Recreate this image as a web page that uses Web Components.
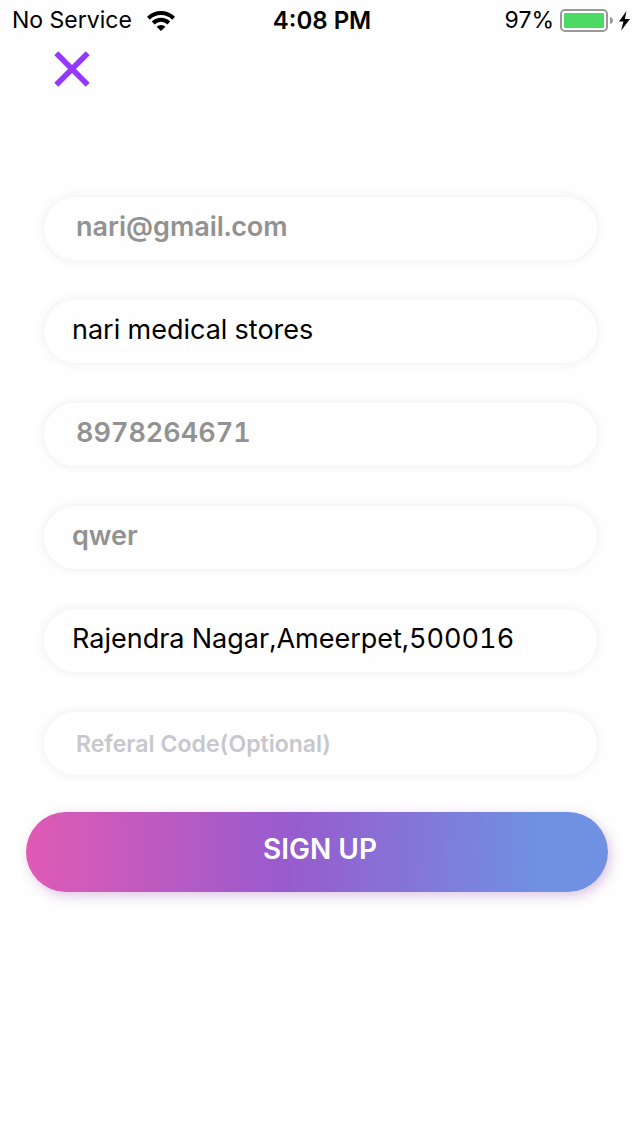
<!DOCTYPE html>
<html lang="en">

<head>
    <meta charset="UTF-8">
    <meta name="viewport" content="width=device-width, initial-scale=1.0">
    <title>Sign Up</title>
    <style>
        body {
            margin: 0;
            background: #fefefe;
            color: #000;
            font-family: Inter, "Liberation Sans", sans-serif;
        }
    </style>
</head>

<body>
    <status-bar>
        <span slot="carrier">No Service</span>
        <span slot="time">4:08 PM</span>
        <span slot="battery">97%</span>
    </status-bar>

    <close-button></close-button>

    <sign-up-form>
        <pill-field label="Email" type="email" value="nari@gmail.com" muted inset></pill-field>
        <pill-field label="Store name" value="nari medical stores"></pill-field>
        <pill-field label="Phone" type="tel" value="8978264671" muted inset></pill-field>
        <pill-field label="Contact name" value="qwer" muted></pill-field>
        <pill-field label="Address" value="Rajendra Nagar,Ameerpet,500016"></pill-field>
        <pill-field label="Referal code" placeholder="Referal Code(Optional)" inset></pill-field>
        <gradient-button slot="action">SIGN UP</gradient-button>
    </sign-up-form>

    <script>
        // Status bar ............................................................... //

        class StatusBar extends HTMLElement {
            constructor() {
                super();
                const shadow = this.attachShadow({ mode: 'open' });
                shadow.innerHTML = `
                    <style>
                        :host {
                            display: grid;
                            grid-template-columns: 1fr auto 1fr;
                            align-items: center;
                            padding: 0 8px 0 12px;
                            font-size: 23px;
                            line-height: 41px;
                        }
                        div { display: flex; align-items: center; }
                        .left { gap: 14px; }
                        .time { font-size: 24px; font-weight: 600; }
                        .right { justify-content: flex-end; gap: 6px; }
                        svg { display: block; flex: none; }
                    </style>
                    <div class="left">
                        <slot name="carrier"></slot>
                        <svg width="30" height="22" viewBox="0 0 30 22" aria-hidden="true">
                            <g fill="none" stroke="#000" stroke-width="4">
                                <path d="M2.4 8.2 A18 18 0 0 1 27.6 8.2"/>
                                <path d="M7.2 13 A11.2 11.2 0 0 1 22.8 13"/>
                            </g>
                            <path d="M10.6 16.7 A6.4 6.4 0 0 1 19.4 16.7 L15 21 Z"/>
                        </svg>
                    </div>
                    <div class="time"><slot name="time"></slot></div>
                    <div class="right">
                        <slot name="battery"></slot>
                        <svg width="72" height="24" viewBox="0 0 72 24" aria-hidden="true">
                            <rect x="1" y="1" width="46" height="21" rx="4" fill="#fff" stroke="#999" stroke-width="2"/>
                            <rect x="4" y="4" width="40" height="15" rx="1" fill="#4cd964"/>
                            <path d="M50 8 Q53 9 53 11.5 T50 15 Z" fill="#999"/>
                            <path d="M66.5 2 L59 12.6 H63.4 L61.2 21.4 L70 10 H64.8 Z"/>
                        </svg>
                    </div>
                `;
            }
        }

        customElements.define('status-bar', StatusBar);

        // Close button ............................................................... //

        class CloseButton extends HTMLElement {
            constructor() {
                super();
                const shadow = this.attachShadow({ mode: 'open' });
                shadow.innerHTML = `
                    <style>
                        :host { display: block; padding: 6px 50px; }
                        button {
                            display: block;
                            padding: 4px;
                            border: 0;
                            background: none;
                            cursor: pointer;
                        }
                        svg { display: block; }
                    </style>
                    <button type="button" aria-label="Close">
                        <svg width="36" height="36" viewBox="0 0 36 36">
                            <path d="M2.3 2.3 L33.7 33.7 M33.7 2.3 L2.3 33.7" stroke="#9538ff" stroke-width="5.6"/>
                        </svg>
                    </button>
                `;
            }
        }

        customElements.define('close-button', CloseButton);

        // Rounded text field ............................................................... //

        class PillField extends HTMLElement {
            constructor() {
                super();
                const shadow = this.attachShadow({ mode: 'open' });
                shadow.innerHTML = `
                    <style>
                        :host { display: block; }
                        input {
                            display: block;
                            box-sizing: border-box;
                            width: 100%;
                            height: 67px;
                            margin: 0;
                            padding: 0 28px 4px;
                            border: 2px solid #f7f7f7;
                            border-radius: 34px;
                            outline: 0;
                            background: #fefefe;
                            box-shadow: 0 0 8px rgba(0, 0, 0, 0.05);
                            color: #000;
                            font: 400 27px Inter, "Liberation Sans", sans-serif;
                            font-variant-numeric: tabular-nums;
                        }
                        :host([inset]) input { padding-left: 32px; }
                        :host([muted]) input { color: #929292; font-weight: 600; }
                        input:placeholder-shown {
                            padding-bottom: 0;
                            font-size: 23px;
                            font-weight: 600;
                        }
                        input::placeholder { color: #c7c7cd; opacity: 1; }
                    </style>
                    <input>
                `;
            }

            connectedCallback() {
                const input = this.shadowRoot.querySelector('input');
                input.type = this.getAttribute('type') || 'text';
                input.placeholder = this.getAttribute('placeholder') || '';
                input.value = this.getAttribute('value') || '';
                input.setAttribute('aria-label', this.getAttribute('label'));
            }
        }

        customElements.define('pill-field', PillField);

        // Gradient button ............................................................... //

        class GradientButton extends HTMLElement {
            constructor() {
                super();
                const shadow = this.attachShadow({ mode: 'open' });
                shadow.innerHTML = `
                    <style>
                        :host { display: block; }
                        button {
                            display: block;
                            width: 100%;
                            height: 80px;
                            padding: 0 0 6px 6px;
                            border: 0;
                            border-radius: 40px;
                            background: linear-gradient(91deg, #e05ab4 0%, #985bce 45%, #7090e2 88%);
                            box-shadow: 3px 4px 12px rgba(150, 70, 170, 0.3);
                            color: #fff;
                            font: 600 28px Inter, "Liberation Sans", sans-serif;
                            cursor: pointer;
                        }
                    </style>
                    <button type="button"><slot></slot></button>
                `;
            }
        }

        customElements.define('gradient-button', GradientButton);

        // Form layout ............................................................... //

        class SignUpForm extends HTMLElement {
            constructor() {
                super();
                const shadow = this.attachShadow({ mode: 'open' });
                shadow.innerHTML = `
                    <style>
                        :host { display: block; padding: 98px 32px 40px 26px; }
                        .fields {
                            display: flex;
                            flex-direction: column;
                            gap: 36px;
                            padding: 0 9px 0 16px;
                        }
                        .action { padding-top: 35px; }
                    </style>
                    <form>
                        <div class="fields"><slot></slot></div>
                        <div class="action"><slot name="action"></slot></div>
                    </form>
                `;
            }
        }

        customElements.define('sign-up-form', SignUpForm);
    </script>
</body>

</html>
